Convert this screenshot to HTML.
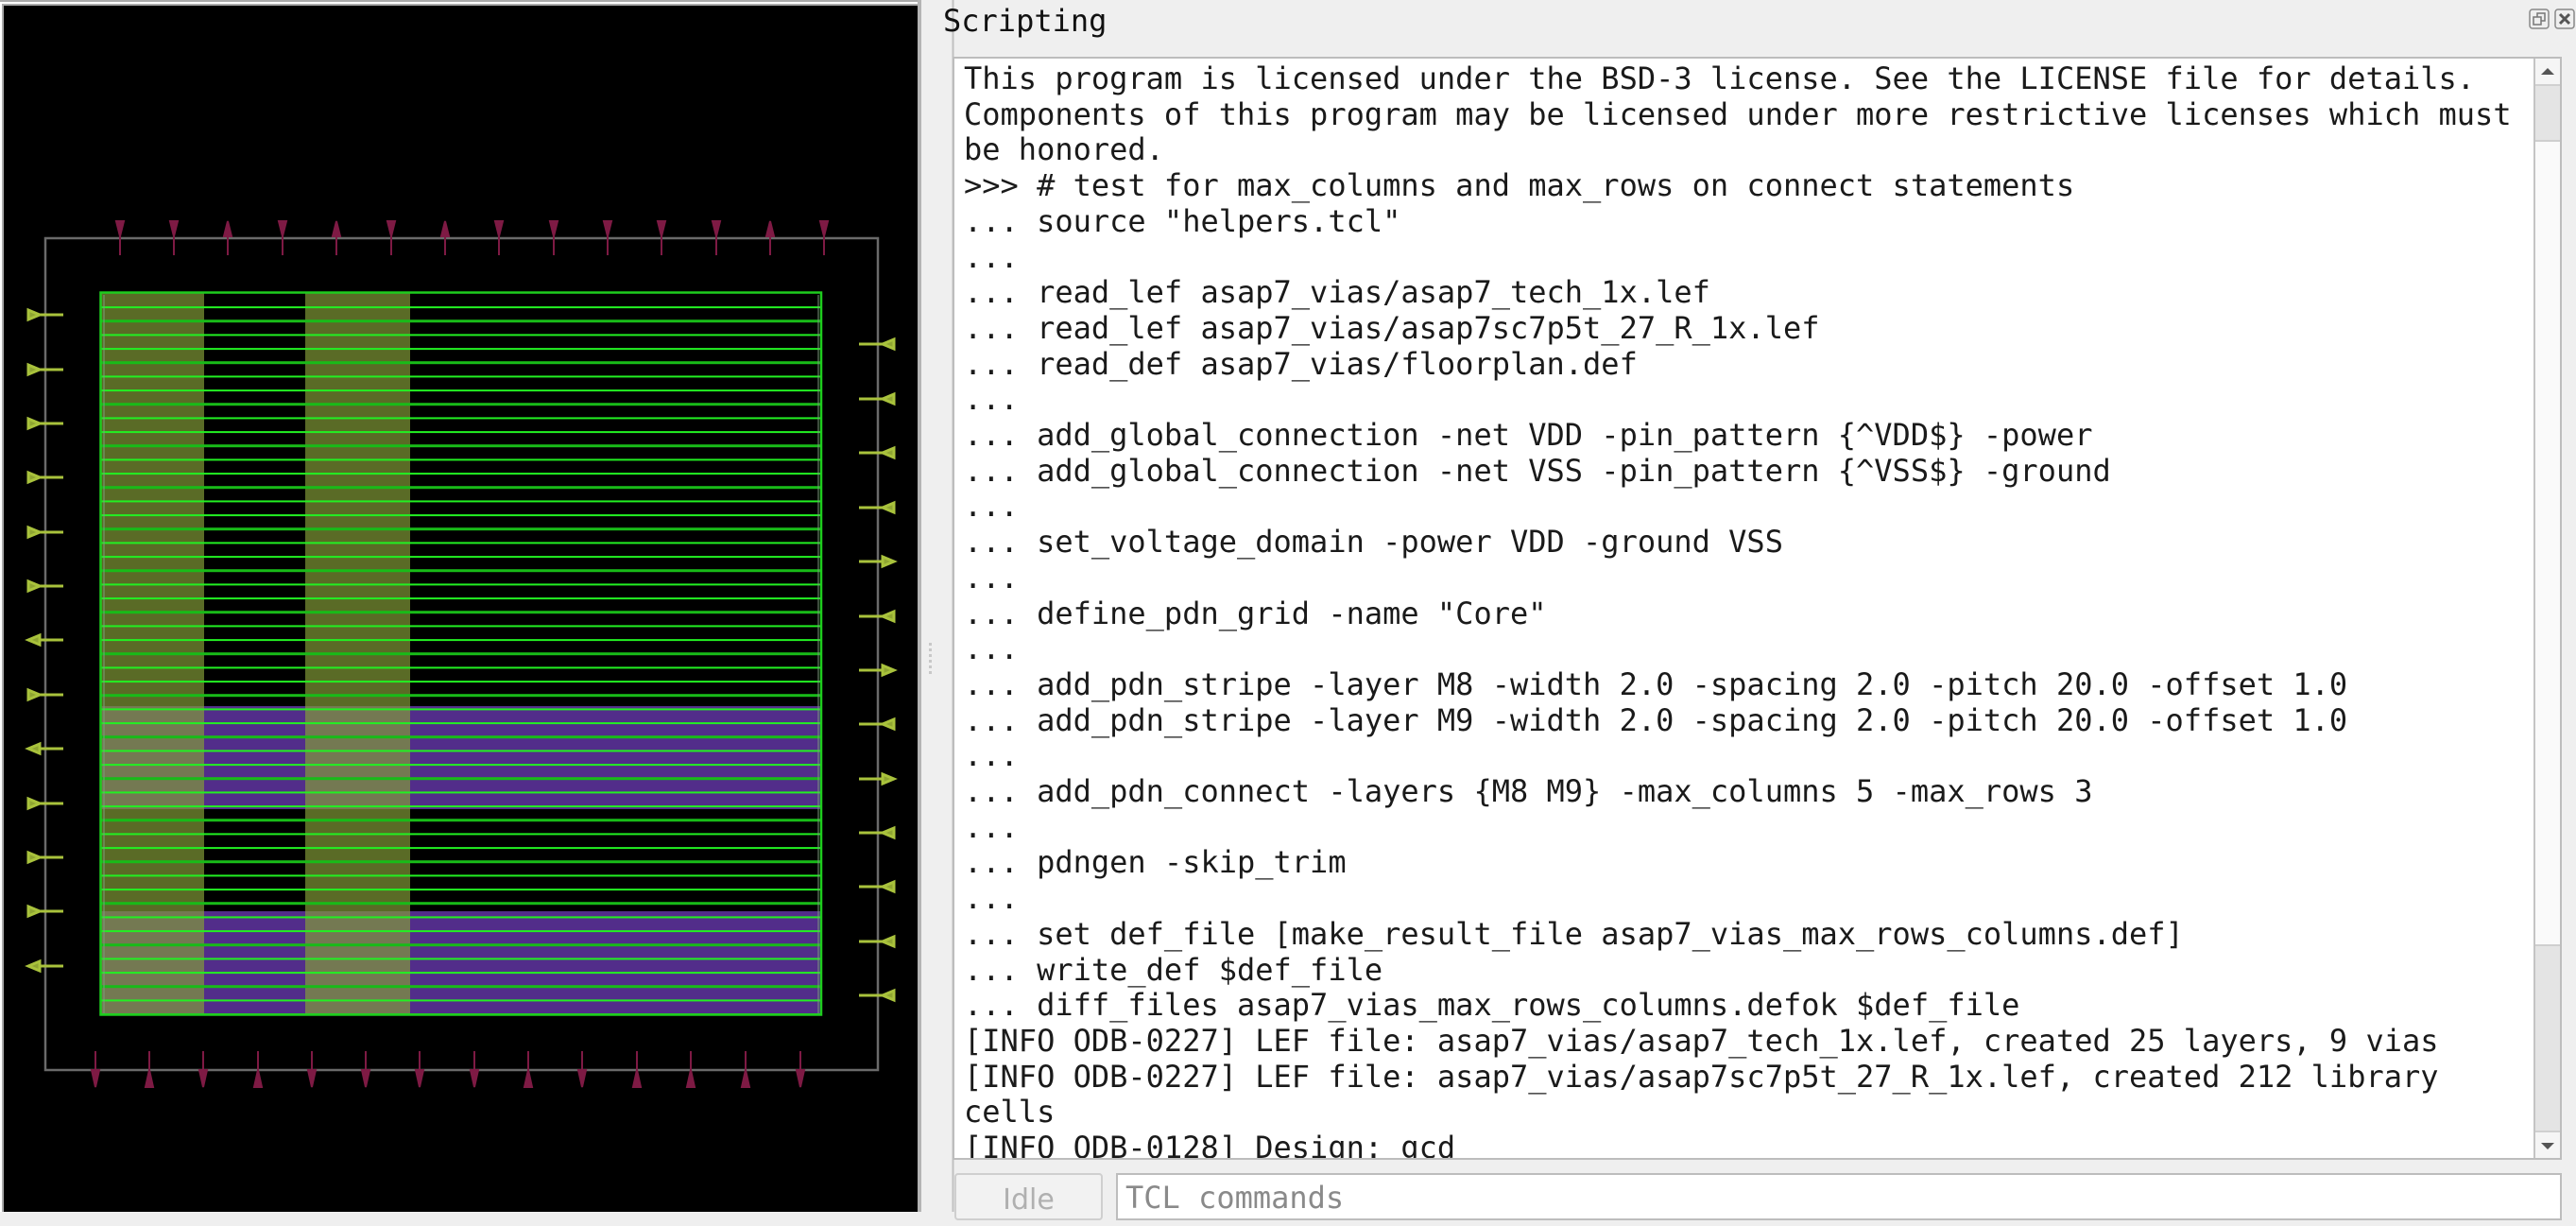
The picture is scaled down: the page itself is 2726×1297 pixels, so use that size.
<!DOCTYPE html>
<html><head><meta charset="utf-8">
<style>
html,body{margin:0;padding:0;}
body{width:2726px;height:1282px;background:#efefef;position:relative;overflow:hidden;font-family:"DejaVu Sans Mono","Liberation Mono",monospace;}
#lp{position:absolute;left:0;top:0;width:975px;height:1282px;display:block;}
#title{position:absolute;left:998px;top:2px;font-size:32px;line-height:40px;color:#111;}
#box{position:absolute;left:1008px;top:60px;width:1703px;height:1167px;background:#fff;border:2px solid #bdbdbd;box-sizing:border-box;overflow:hidden;}
#txt{position:absolute;left:10px;top:3px;margin:0;font-family:"DejaVu Sans Mono",monospace;font-size:32px;line-height:37.7px;color:#1a1a1a;white-space:pre;}
#sb{position:absolute;right:0;top:0;width:28px;height:100%;background:#fafafa;border-left:2px solid #c4c4c4;box-sizing:border-box;}
#idle{position:absolute;left:1010px;top:1241px;width:157px;height:50px;border:2px solid #cfcfcf;border-radius:4px;background:#f2f2f2;box-sizing:border-box;color:#b0b0b0;font-family:"DejaVu Sans","Liberation Sans",sans-serif;font-size:30px;text-align:center;line-height:54px;}
#inp{position:absolute;left:1181px;top:1241px;width:1530px;height:50px;border:2px solid #bdbdbd;background:#fff;box-sizing:border-box;color:#8a8a8a;font-size:32px;line-height:48px;padding-left:8px;}
</style></head><body>
<svg id="lp" width="975" height="1282" viewBox="0 0 975 1282">
<rect x="0" y="0" width="975" height="1282" fill="#000"/>
<rect x="0" y="0" width="975" height="2" fill="#aaa"/>
<rect x="0" y="2" width="975" height="2" fill="#fff"/>
<rect x="2" y="4" width="971" height="2" fill="#aaa"/>
<rect x="0" y="2" width="2" height="1280" fill="#fff"/>
<rect x="2" y="4" width="2" height="1278" fill="#aaa"/>
<rect x="971" y="0" width="4" height="1282" fill="#b4b4b4"/>
<rect x="48" y="252" width="881" height="880" fill="none" stroke="#6a6a6a" stroke-width="2.5"/>
<rect x="106" y="747" width="763" height="109" fill="#522d8a"/>
<rect x="106" y="964" width="763" height="110" fill="#522d8a"/>
<rect x="106" y="309" width="110" height="765" fill="#849d38" opacity="0.68"/>
<rect x="323" y="309" width="111" height="765" fill="#849d38" opacity="0.68"/>
<defs>
<pattern id="hl" x="106" y="318" width="763" height="44" patternUnits="userSpaceOnUse">
<rect x="0" y="6.1" width="763" height="2" fill="#22f022"/>
<rect x="0" y="20.2" width="763" height="3" fill="#18bb18"/>
<rect x="0" y="35.4" width="763" height="2" fill="#22f022"/>
</pattern>
</defs>
<rect x="106" y="318" width="763" height="760" fill="url(#hl)"/>
<rect x="106.5" y="309.5" width="762.5" height="764" fill="none" stroke="#1ecc1e" stroke-width="2.5"/>
<line x1="110" y1="312" x2="110" y2="1072" stroke="#7c9c7c" stroke-width="1"/>
<line x1="866" y1="312" x2="866" y2="1072" stroke="#7c9c7c" stroke-width="1"/>
<g stroke="#7e1a44" stroke-width="2" fill="#7e1a44">
<line x1="127" y1="235" x2="127" y2="270"/><polygon points="123,234 131,234 127,250"/>
<line x1="184" y1="235" x2="184" y2="270"/><polygon points="180,234 188,234 184,250"/>
<line x1="241" y1="235" x2="241" y2="270"/><polygon points="241,234 237,250 245,250"/>
<line x1="299" y1="235" x2="299" y2="270"/><polygon points="295,234 303,234 299,250"/>
<line x1="356" y1="235" x2="356" y2="270"/><polygon points="356,234 352,250 360,250"/>
<line x1="414" y1="235" x2="414" y2="270"/><polygon points="410,234 418,234 414,250"/>
<line x1="471" y1="235" x2="471" y2="270"/><polygon points="471,234 467,250 475,250"/>
<line x1="528" y1="235" x2="528" y2="270"/><polygon points="524,234 532,234 528,250"/>
<line x1="586" y1="235" x2="586" y2="270"/><polygon points="582,234 590,234 586,250"/>
<line x1="643" y1="235" x2="643" y2="270"/><polygon points="639,234 647,234 643,250"/>
<line x1="700" y1="235" x2="700" y2="270"/><polygon points="696,234 704,234 700,250"/>
<line x1="758" y1="235" x2="758" y2="270"/><polygon points="754,234 762,234 758,250"/>
<line x1="815" y1="235" x2="815" y2="270"/><polygon points="815,234 811,250 819,250"/>
<line x1="872" y1="235" x2="872" y2="270"/><polygon points="868,234 876,234 872,250"/>
<line x1="101" y1="1112" x2="101" y2="1148"/><polygon points="97,1132 105,1132 101,1150"/>
<line x1="158" y1="1112" x2="158" y2="1148"/><polygon points="158,1132 154,1150 162,1150"/>
<line x1="215" y1="1112" x2="215" y2="1148"/><polygon points="211,1132 219,1132 215,1150"/>
<line x1="273" y1="1112" x2="273" y2="1148"/><polygon points="273,1132 269,1150 277,1150"/>
<line x1="330" y1="1112" x2="330" y2="1148"/><polygon points="326,1132 334,1132 330,1150"/>
<line x1="387" y1="1112" x2="387" y2="1148"/><polygon points="383,1132 391,1132 387,1150"/>
<line x1="444" y1="1112" x2="444" y2="1148"/><polygon points="440,1132 448,1132 444,1150"/>
<line x1="502" y1="1112" x2="502" y2="1148"/><polygon points="498,1132 506,1132 502,1150"/>
<line x1="559" y1="1112" x2="559" y2="1148"/><polygon points="559,1132 555,1150 563,1150"/>
<line x1="616" y1="1112" x2="616" y2="1148"/><polygon points="612,1132 620,1132 616,1150"/>
<line x1="674" y1="1112" x2="674" y2="1148"/><polygon points="674,1132 670,1150 678,1150"/>
<line x1="731" y1="1112" x2="731" y2="1148"/><polygon points="731,1132 727,1150 735,1150"/>
<line x1="789" y1="1112" x2="789" y2="1148"/><polygon points="789,1132 785,1150 793,1150"/>
<line x1="847" y1="1112" x2="847" y2="1148"/><polygon points="843,1132 851,1132 847,1150"/>
</g>
<g stroke="#a9c23c" stroke-width="3" fill="#8fa532">
<line x1="36" y1="333" x2="67" y2="333"/><polygon points="30,328 30,338 42,333"/>
<line x1="36" y1="391" x2="67" y2="391"/><polygon points="30,386 30,396 42,391"/>
<line x1="36" y1="448" x2="67" y2="448"/><polygon points="30,443 30,453 42,448"/>
<line x1="36" y1="505" x2="67" y2="505"/><polygon points="30,500 30,510 42,505"/>
<line x1="36" y1="563" x2="67" y2="563"/><polygon points="30,558 30,568 42,563"/>
<line x1="36" y1="620" x2="67" y2="620"/><polygon points="30,615 30,625 42,620"/>
<line x1="36" y1="677" x2="67" y2="677"/><polygon points="30,677 42,672 42,682"/>
<line x1="36" y1="735" x2="67" y2="735"/><polygon points="30,730 30,740 42,735"/>
<line x1="36" y1="792" x2="67" y2="792"/><polygon points="30,792 42,787 42,797"/>
<line x1="36" y1="850" x2="67" y2="850"/><polygon points="30,845 30,855 42,850"/>
<line x1="36" y1="907" x2="67" y2="907"/><polygon points="30,902 30,912 42,907"/>
<line x1="36" y1="964" x2="67" y2="964"/><polygon points="30,959 30,969 42,964"/>
<line x1="36" y1="1022" x2="67" y2="1022"/><polygon points="30,1022 42,1017 42,1027"/>
<line x1="909" y1="364" x2="940" y2="364"/><polygon points="934,364 946,359 946,369"/>
<line x1="909" y1="422" x2="940" y2="422"/><polygon points="934,422 946,417 946,427"/>
<line x1="909" y1="479" x2="940" y2="479"/><polygon points="934,479 946,474 946,484"/>
<line x1="909" y1="537" x2="940" y2="537"/><polygon points="934,537 946,532 946,542"/>
<line x1="909" y1="594" x2="940" y2="594"/><polygon points="934,589 934,599 946,594"/>
<line x1="909" y1="652" x2="940" y2="652"/><polygon points="934,652 946,647 946,657"/>
<line x1="909" y1="709" x2="940" y2="709"/><polygon points="934,704 934,714 946,709"/>
<line x1="909" y1="766" x2="940" y2="766"/><polygon points="934,766 946,761 946,771"/>
<line x1="909" y1="824" x2="940" y2="824"/><polygon points="934,819 934,829 946,824"/>
<line x1="909" y1="881" x2="940" y2="881"/><polygon points="934,881 946,876 946,886"/>
<line x1="909" y1="938" x2="940" y2="938"/><polygon points="934,938 946,933 946,943"/>
<line x1="909" y1="996" x2="940" y2="996"/><polygon points="934,996 946,991 946,1001"/>
<line x1="909" y1="1053" x2="940" y2="1053"/><polygon points="934,1053 946,1048 946,1058"/>
</g>
</svg>
<svg style="position:absolute;left:975px;top:0" width="40" height="1282">
<line x1="33.5" y1="0" x2="33.5" y2="1282" stroke="#c0c0c0" stroke-width="2"/>
<g fill="#c8c8c8"><rect x="8" y="680" width="3" height="3"/><rect x="8" y="686" width="3" height="3"/><rect x="8" y="692" width="3" height="3"/><rect x="8" y="698" width="3" height="3"/><rect x="8" y="704" width="3" height="3"/><rect x="8" y="710" width="3" height="3"/></g>
</svg>
<div id="title">Scripting</div>
<svg style="position:absolute;left:2676px;top:9px" width="50" height="24">
<rect x="1" y="1" width="20" height="20" rx="3" fill="none" stroke="#888" stroke-width="1.5"/>
<rect x="9" y="5" width="8" height="8" fill="none" stroke="#777" stroke-width="1.5"/>
<rect x="5" y="9" width="8" height="8" fill="#efefef" stroke="#777" stroke-width="1.5"/>
<rect x="28" y="1" width="20" height="20" rx="3" fill="none" stroke="#888" stroke-width="1.5"/>
<path d="M33 6 L43 16 M43 6 L33 16" stroke="#555" stroke-width="3"/>
</svg>
<div id="box">
<pre id="txt">This program is licensed under the BSD-3 license. See the LICENSE file for details.
Components of this program may be licensed under more restrictive licenses which must
be honored.
&gt;&gt;&gt; # test for max_columns and max_rows on connect statements
... source "helpers.tcl"
...
... read_lef asap7_vias/asap7_tech_1x.lef
... read_lef asap7_vias/asap7sc7p5t_27_R_1x.lef
... read_def asap7_vias/floorplan.def
...
... add_global_connection -net VDD -pin_pattern {^VDD$} -power
... add_global_connection -net VSS -pin_pattern {^VSS$} -ground
...
... set_voltage_domain -power VDD -ground VSS
...
... define_pdn_grid -name "Core"
...
... add_pdn_stripe -layer M8 -width 2.0 -spacing 2.0 -pitch 20.0 -offset 1.0
... add_pdn_stripe -layer M9 -width 2.0 -spacing 2.0 -pitch 20.0 -offset 1.0
...
... add_pdn_connect -layers {M8 M9} -max_columns 5 -max_rows 3
...
... pdngen -skip_trim
...
... set def_file [make_result_file asap7_vias_max_rows_columns.def]
... write_def $def_file
... diff_files asap7_vias_max_rows_columns.defok $def_file
[INFO ODB-0227] LEF file: asap7_vias/asap7_tech_1x.lef, created 25 layers, 9 vias
[INFO ODB-0227] LEF file: asap7_vias/asap7sc7p5t_27_R_1x.lef, created 212 library
cells
[INFO ODB-0128] Design: gcd</pre>
<div id="sb">
<div style="position:absolute;left:0;top:0;width:26px;height:27px;border-bottom:2px solid #d0d0d0;background:#f5f5f5"></div>
<svg style="position:absolute;left:4px;top:9px" width="18" height="10"><polygon points="9,1 2,8 16,8" fill="#555"/></svg>
<div style="position:absolute;left:0;top:29px;width:26px;height:57px;background:#e4e4e4;border-bottom:2px solid #cfcfcf"></div>
<div style="position:absolute;left:0;top:937px;width:26px;height:200px;background:#e4e4e4;border-top:2px solid #cfcfcf"></div>
<div style="position:absolute;left:0;bottom:0;width:26px;height:27px;border-top:2px solid #d0d0d0;background:#f5f5f5"></div>
<svg style="position:absolute;left:4px;bottom:8px" width="18" height="10"><polygon points="2,2 16,2 9,9" fill="#555"/></svg>
</div>
</div>
<div id="idle">Idle</div>
<div id="inp">TCL commands</div>
</body></html>
